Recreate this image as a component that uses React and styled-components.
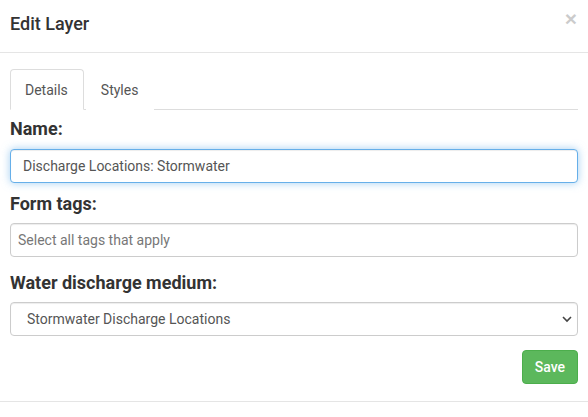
import React from "react"
import styled, { createGlobalStyle } from "styled-components"

const GlobalStyle = createGlobalStyle`
  * { box-sizing: border-box; }
  body {
    margin: 0;
    background: #fff;
    font-family: Roboto, "Helvetica Neue", Arial, sans-serif;
    font-size: 14px;
    color: #333;
  }
`

const Modal = styled.div`
  width: 588px;
  background: #fff;
`

const Header = styled.div`
  display: flex;
  align-items: center;
  justify-content: space-between;
  height: 53px;
  padding: 0 10px;
  border-bottom: 1px solid #e5e5e5;
`

const Title = styled.h4`
  margin: 0 0 4px;
  font-size: 18px;
  font-weight: 500;
  line-height: 22px;
  color: #333;
`

const Close = styled.button`
  border: 0;
  background: none;
  padding: 0;
  margin: 0 1px 16px 0;
  font-family: "Helvetica Neue", Arial, sans-serif;
  font-size: 21px;
  font-weight: 700;
  line-height: 1;
  color: #000;
  opacity: 0.2;
  text-shadow: 0 1px 0 #fff;
  cursor: pointer;
`

const Body = styled.div`
  padding: 16px 10px 17px;
  border-bottom: 1px solid #e5e5e5;
`

const TabList = styled.ul`
  display: flex;
  list-style: none;
  margin: 0 0 7px;
  padding: 0;
  border-bottom: 1px solid #ddd;
`

const Tab = styled.li`
  margin-bottom: -1px;
  margin-right: 2px;
  padding: 10px 15px 9px 14px;
  line-height: 20px;
  font-size: 14px;
  color: #555;
  border: 1px solid ${p => (p.$active ? "#ddd" : "transparent")};
  border-bottom-color: ${p => (p.$active ? "#fff" : "transparent")};
  border-radius: 4px 4px 0 0;
  background: #fff;
  cursor: default;
`

const Group = styled.div`
  margin-bottom: ${p => p.$mb || 0}px;
`

const Label = styled.label`
  display: block;
  margin-bottom: ${p => p.$mb || 8}px;
  font-size: 18px;
  font-weight: 700;
  line-height: 24px;
  color: #333;
`

const Input = styled.input`
  display: block;
  width: 100%;
  height: 34px;
  padding: 6px ${p => p.$px || 12}px;
  font-family: Roboto, Arial, sans-serif;
  font-size: 14px;
  line-height: 20px;
  color: #555;
  background: #fff;
  border: 1px solid ${p => (p.$focus ? "#66afe9" : "#ccc")};
  border-radius: 4px;
  outline: 0;
  box-shadow: ${p =>
    p.$focus
      ? "inset 0 1px 1px rgba(0,0,0,.075), 0 0 8px rgba(102,175,233,.6)"
      : "inset 0 1px 1px rgba(0,0,0,.075)"};

  &::placeholder {
    color: #777;
  }
`

const SelectWrap = styled.div`
  position: relative;
`

const Select = styled.select`
  display: block;
  width: 100%;
  height: 34px;
  padding: 6px 12px 6px 16px;
  font-family: Roboto, Arial, sans-serif;
  font-size: 14px;
  color: #555;
  background: #fff;
  border: 1px solid #ccc;
  border-radius: 4px;
  appearance: none;
  -webkit-appearance: none;
  outline: 0;
  box-shadow: inset 0 1px 1px rgba(0,0,0,.075);
`

const Chevron = styled.svg`
  position: absolute;
  right: 6px;
  top: 13px;
  pointer-events: none;
`

const Actions = styled.div`
  display: flex;
  justify-content: flex-end;
  margin-top: 14px;
`

const SaveButton = styled.button`
  height: 34px;
  padding: 6px 12px;
  font-family: Roboto, Arial, sans-serif;
  font-size: 14px;
  font-weight: 500;
  line-height: 20px;
  color: #fff;
  background: #5cb85c;
  border: 1px solid #4cae4c;
  border-radius: 4px;
  cursor: pointer;
`

export default function App() {
  return (
    <>
      <GlobalStyle />
      <Modal>
        <Header>
          <Title>Edit Layer</Title>
          <Close aria-label="Close">×</Close>
        </Header>
        <Body>
          <TabList>
            <Tab $active>Details</Tab>
            <Tab>Styles</Tab>
          </TabList>

          <Group $mb={9}>
            <Label $mb={8}>Name:</Label>
            <Input $focus defaultValue="Discharge Locations: Stormwater" />
          </Group>

          <Group $mb={14}>
            <Label $mb={7}>Form tags:</Label>
            <Input $px={7} placeholder="Select all tags that apply" />
          </Group>

          <Group>
            <Label $mb={7}>Water discharge medium:</Label>
            <SelectWrap>
              <Select defaultValue="storm">
                <option value="storm">Stormwater Discharge Locations</option>
              </Select>
              <Chevron width="10" height="8" viewBox="0 0 10 8">
                <path d="M1 2l4 4 4-4" fill="none" stroke="#444" strokeWidth="1.6" />
              </Chevron>
            </SelectWrap>
          </Group>

          <Actions>
            <SaveButton>Save</SaveButton>
          </Actions>
        </Body>
      </Modal>
    </>
  )
}
